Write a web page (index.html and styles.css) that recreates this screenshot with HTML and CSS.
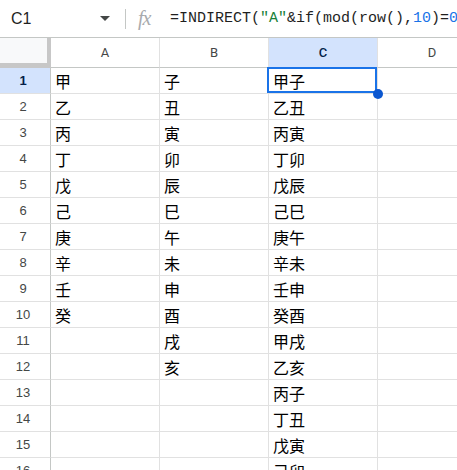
FILE: index.html
```html
<!DOCTYPE html>
<html>
<head>
<meta charset="utf-8">
<link rel="stylesheet" href="styles.css">
</head>
<body>
<div class="fbar">
  <div class="namebox"><span class="ref">C1</span><span class="caret"></span></div>
  <div class="sep"></div>
  <span class="fx">fx</span>
  <div class="formula">=INDIRECT(<span class="str">"A"</span>&amp;if(mod(row(),<span class="num">10</span>)=<span class="num">0</span>,<span class="num">10</span>,mod(row(),<span class="num">10</span>)))&amp;INDIRECT(<span class="str">"B"</span>&amp;if(mod(row(),<span class="num">12</span>)=<span class="num">0</span>,<span class="num">12</span>,mod(row(),<span class="num">12</span>)))</div>
</div>
<div class="sheet">
  <div class="corner"></div>
  <div class="colh">A</div>
  <div class="colh">B</div>
  <div class="colh sel">C</div>
  <div class="colh">D</div>

  <div class="rowh sel">1</div><div class="cell">甲</div><div class="cell">子</div><div class="cell active">甲子<span class="box"></span><span class="handle"></span></div><div class="cell"></div>
  <div class="rowh">2</div><div class="cell">乙</div><div class="cell">丑</div><div class="cell">乙丑</div><div class="cell"></div>
  <div class="rowh">3</div><div class="cell">丙</div><div class="cell">寅</div><div class="cell">丙寅</div><div class="cell"></div>
  <div class="rowh">4</div><div class="cell">丁</div><div class="cell">卯</div><div class="cell">丁卯</div><div class="cell"></div>
  <div class="rowh">5</div><div class="cell">戊</div><div class="cell">辰</div><div class="cell">戊辰</div><div class="cell"></div>
  <div class="rowh">6</div><div class="cell">己</div><div class="cell">巳</div><div class="cell">己巳</div><div class="cell"></div>
  <div class="rowh">7</div><div class="cell">庚</div><div class="cell">午</div><div class="cell">庚午</div><div class="cell"></div>
  <div class="rowh">8</div><div class="cell">辛</div><div class="cell">未</div><div class="cell">辛未</div><div class="cell"></div>
  <div class="rowh">9</div><div class="cell">壬</div><div class="cell">申</div><div class="cell">壬申</div><div class="cell"></div>
  <div class="rowh">10</div><div class="cell">癸</div><div class="cell">酉</div><div class="cell">癸酉</div><div class="cell"></div>
  <div class="rowh">11</div><div class="cell"></div><div class="cell">戌</div><div class="cell">甲戌</div><div class="cell"></div>
  <div class="rowh">12</div><div class="cell"></div><div class="cell">亥</div><div class="cell">乙亥</div><div class="cell"></div>
  <div class="rowh">13</div><div class="cell"></div><div class="cell"></div><div class="cell">丙子</div><div class="cell"></div>
  <div class="rowh">14</div><div class="cell"></div><div class="cell"></div><div class="cell">丁丑</div><div class="cell"></div>
  <div class="rowh">15</div><div class="cell"></div><div class="cell"></div><div class="cell">戊寅</div><div class="cell"></div>
  <div class="rowh">16</div><div class="cell"></div><div class="cell"></div><div class="cell">己卯</div><div class="cell"></div>
</div>
</body>
</html>
```
FILE: styles.css
```css
html, body {
  margin: 0;
  padding: 0;
  background: #ffffff;
  overflow: hidden;
}
body {
  width: 457px;
  height: 470px;
  font-family: "Liberation Sans", Arial, sans-serif;
}
.fbar {
  display: flex;
  align-items: center;
  height: 37px;
  border-bottom: 1px solid #c4c7c5;
  white-space: nowrap;
  overflow: hidden;
}
.namebox {
  display: flex;
  align-items: center;
  justify-content: space-between;
  box-sizing: border-box;
  width: 110px;
  padding-left: 11px;
  flex: none;
}
.ref {
  font-size: 16px;
  color: #1f1f1f;
}
.caret {
  width: 0;
  height: 0;
  border-left: 5px solid transparent;
  border-right: 5px solid transparent;
  border-top: 5px solid #444746;
}
.sep {
  flex: none;
  width: 1px;
  height: 20px;
  background: #c4c7c5;
  margin-left: 15px;
}
.fx {
  flex: none;
  margin-left: 12px;
  width: 20px;
  font-family: "Liberation Serif", "DejaVu Serif", serif;
  font-style: italic;
  font-size: 20px;
  color: #a8abae;
  letter-spacing: -1px;
}
.formula {
  flex: none;
  margin-left: 12px;
  font-family: "Liberation Mono", "DejaVu Sans Mono", monospace;
  font-size: 15px;
  color: #1f1f1f;
}
.str { color: #188038; }
.num { color: #1a73e8; }

.sheet {
  display: grid;
  grid-template-columns: 51px repeat(4, 109px);
  grid-template-rows: 30px;
  grid-auto-rows: 26px;
  width: 457px;
  overflow: hidden;
}
.sheet > div {
  box-sizing: border-box;
  border-right: 1px solid #e1e1e1;
  border-bottom: 1px solid #e1e1e1;
}
.corner {
  background: #f8f9fa;
  border-right: 4px solid #c7c7c7 !important;
  border-bottom: 5px solid #c7c7c7 !important;
}
.colh {
  display: flex;
  align-items: center;
  justify-content: center;
  font-family: Roboto, "Liberation Sans", sans-serif;
  font-size: 13px;
  color: #444746;
  border-bottom-color: #c4c7c5 !important;
}
.colh.sel, .rowh.sel {
  background: #d3e3fd;
  color: #0b57d0;
  font-weight: 700;
}
.colh.sel { font-weight: 500; color: #041e49; }
.rowh {
  display: flex;
  align-items: center;
  justify-content: center;
  font-size: 13px;
  color: #444746;
  border-right-color: #c4c7c5 !important;
  padding-right: 4px;
}
.rowh.sel { color: #041e49; }
.cell {
  display: flex;
  align-items: center;
  padding-left: 4px;
  font-family: "Noto Sans CJK SC", sans-serif;
  font-size: 16px;
  color: #000000;
  white-space: nowrap;
}
.active {
  position: relative;
}
.box {
  position: absolute;
  left: -2px;
  top: -1px;
  right: 0;
  bottom: 0;
  border: 2px solid #1a73e8;
}
.handle {
  position: absolute;
  right: -6px;
  bottom: -6px;
  width: 10px;
  height: 10px;
  border-radius: 50%;
  background: #0b57d0;
  z-index: 2;
}
```
